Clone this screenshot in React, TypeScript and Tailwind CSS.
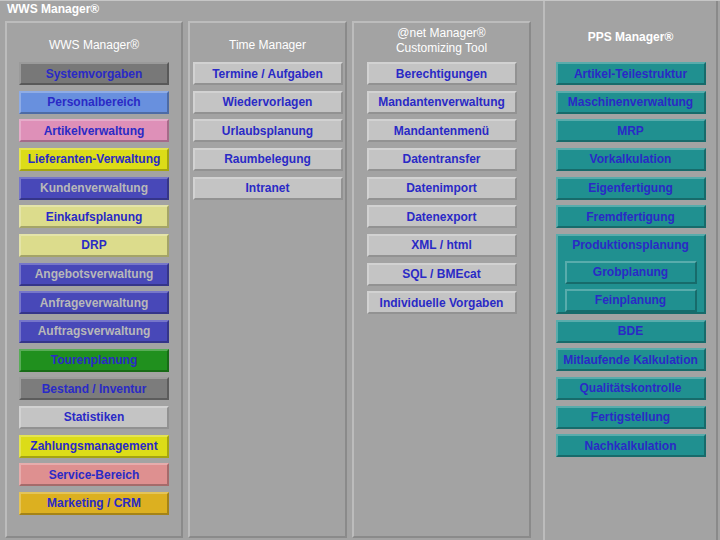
import React from 'react'

type Item = { label: string; bg: string; text?: string }

const wws: Item[] = [
  { label: 'Systemvorgaben', bg: 'bg-[#787878]' },
  { label: 'Personalbereich', bg: 'bg-[#6890de]' },
  { label: 'Artikelverwaltung', bg: 'bg-[#de90b8]' },
  { label: 'Lieferanten-Verwaltung', bg: 'bg-[#dcdc18]' },
  { label: 'Kundenverwaltung', bg: 'bg-[#4848b8]', text: 'text-[#b8b8b8]' },
  { label: 'Einkaufsplanung', bg: 'bg-[#dcdc8c]' },
  { label: 'DRP', bg: 'bg-[#dcdc8c]' },
  { label: 'Angebotsverwaltung', bg: 'bg-[#4848b8]', text: 'text-[#b8b8b8]' },
  { label: 'Anfrageverwaltung', bg: 'bg-[#4848b8]', text: 'text-[#b8b8b8]' },
  { label: 'Auftragsverwaltung', bg: 'bg-[#4848b8]', text: 'text-[#b8b8b8]' },
  { label: 'Tourenplanung', bg: 'bg-[#20901e]' },
  { label: 'Bestand / Inventur', bg: 'bg-[#7c7c7c]' },
  { label: 'Statistiken', bg: 'bg-[#c4c4c4]' },
  { label: 'Zahlungsmanagement', bg: 'bg-[#dcdc18]' },
  { label: 'Service-Bereich', bg: 'bg-[#de9090]' },
  { label: 'Marketing / CRM', bg: 'bg-[#dcb020]' },
]

const time = ['Termine / Aufgaben', 'Wiedervorlagen', 'Urlaubsplanung', 'Raumbelegung', 'Intranet']

const net = [
  'Berechtigungen', 'Mandantenverwaltung', 'Mandantenmenü', 'Datentransfer', 'Datenimport',
  'Datenexport', 'XML / html', 'SQL / BMEcat', 'Individuelle Vorgaben',
]

const ppsTop = ['Artikel-Teilestruktur', 'Maschinenverwaltung', 'MRP', 'Vorkalkulation', 'Eigenfertigung', 'Fremdfertigung']
const ppsBottom = ['BDE', 'Mitlaufende Kalkulation', 'Qualitätskontrolle', 'Fertigstellung', 'Nachkalkulation']

function Btn({ label, bg, text = 'text-[#2a2ac6]', w = 'w-[150px]' }: { label: string; bg: string; text?: string; w?: string }) {
  return (
    <div className={`${w} h-[23px] shrink-0 flex items-center justify-center border-2 border-t-white/25 border-l-white/25 border-r-black/25 border-b-black/25 text-[12px] font-bold leading-none whitespace-nowrap ${bg} ${text}`}>
      {label}
    </div>
  )
}

function Panel({ width, children }: { width: string; children: React.ReactNode }) {
  return (
    <div className={`${width} h-full flex flex-col items-center border-t-2 border-l-2 border-[#bcbcbc] border-r-2 border-r-[#8a8a8a] border-b-2 border-b-[#8a8a8a]`}>
      {children}
    </div>
  )
}

export default function App() {
  return (
    <div className="w-[720px] h-[540px] bg-[#a3a3a3] border-t border-[#c6c6c6] flex overflow-hidden" style={{ fontFamily: '"Liberation Sans", Arial, sans-serif' }}>
      <div className="w-[531px] flex flex-col">
        <div className="h-[20px] pl-[7px] pt-[1px] text-[12px] font-bold text-white leading-[14px]">WWS Manager®</div>
        <div className="flex-1 flex gap-[5px] pl-[5px] pb-[2px]">
          <Panel width="w-[178px]">
            <div className="h-[39px] pt-[15px] text-[12px] leading-[14px] text-white">WWS Manager®</div>
            <div className="flex flex-col gap-[5.67px]">
              {wws.map(i => <Btn key={i.label} {...i} />)}
            </div>
          </Panel>
          <Panel width="w-[159px]">
            <div className="h-[39px] pt-[15px] text-[12px] leading-[14px] text-white">Time Manager</div>
            <div className="flex flex-col gap-[5.67px]">
              {time.map(l => <Btn key={l} label={l} bg="bg-[#c4c4c4]" />)}
            </div>
          </Panel>
          <Panel width="w-[179px]">
            <div className="h-[39px] pt-[3px] text-[12px] leading-[15px] text-white text-center">
              <div>@net Manager®</div>
              <div>Customizing Tool</div>
            </div>
            <div className="flex flex-col gap-[5.67px]">
              {net.map(l => <Btn key={l} label={l} bg="bg-[#c4c4c4]" />)}
            </div>
          </Panel>
        </div>
      </div>
      <div className="w-[12px]" />
      <div className="w-[175px] h-full flex flex-col items-center border-l-2 border-[#bcbcbc] border-r-2 border-r-[#8a8a8a]">
        <div className="h-[61px] pt-[29px] text-[12px] font-bold leading-[14px] text-white">PPS Manager®</div>
        <div className="flex flex-col gap-[5.67px]">
          {ppsTop.map(l => <Btn key={l} label={l} bg="bg-[#209090]" />)}
          <div className="w-[150px] h-[80px] shrink-0 flex flex-col items-center bg-[#209090] border-2 border-t-white/25 border-l-white/25 border-r-black/25 border-b-black/25">
            <div className="h-[18px] leading-[18px] text-[12px] font-bold text-[#2a2ac6]">Produktionsplanung</div>
            <div className="mt-[7px] flex flex-col gap-[5px]">
              <Btn label="Grobplanung" bg="bg-[#209090]" w="w-[132px]" />
              <Btn label="Feinplanung" bg="bg-[#209090]" w="w-[132px]" />
            </div>
          </div>
          {ppsBottom.map(l => <Btn key={l} label={l} bg="bg-[#209090]" />)}
        </div>
      </div>
    </div>
  )
}
